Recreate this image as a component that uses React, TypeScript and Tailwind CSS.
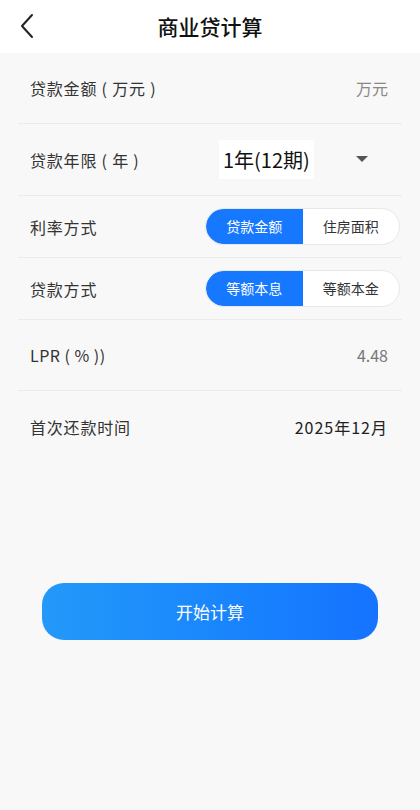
import {useState} from "react";

const font = {fontFamily: '"Noto Sans CJK SC", "Noto Sans", sans-serif'};

function Toggle({options, value, onChange}: {options: string[]; value: number; onChange: (i: number) => void}) {
  return (
    <div className="mr-[2px] flex h-[37px] w-[195px] rounded-full border border-[#e8e8e8] bg-white overflow-hidden">
      {options.map((opt, i) => (
        <button
          key={opt}
          onClick={() => onChange(i)}
          className={`flex-1 text-[14px] ${
            value === i ? "bg-[#1677ff] text-white rounded-l-full" : "text-[#333]"
          }`}
        >
          {opt}
        </button>
      ))}
    </div>
  );
}

export default function App() {
  const [rate, setRate] = useState(0);
  const [method, setMethod] = useState(0);

  return (
    <div style={font} className="min-h-[810px] w-[420px] bg-[#f8f8f8] text-[#333]">
      {/* Header */}
      <div className="relative flex h-[53px] items-center justify-center bg-white">
        <button className="absolute left-[18px] top-[13px]">
          <svg width="18" height="26" viewBox="0 0 18 26" fill="none">
            <path d="M14 2 L4 13 L14 24" stroke="#222" strokeWidth="2" strokeLinecap="round" strokeLinejoin="round"/>
          </svg>
        </button>
        <h1 className="text-[21px] font-medium text-[#111]">商业贷计算</h1>
      </div>

      {/* Form */}
      <div className="px-[18px]">
        <div className="flex h-[71px] items-center justify-between border-b border-[#ececec] pl-3 pr-[14px]">
          <span className="text-[16px] tracking-[0.8px]">贷款金额 ( 万元 )</span>
          <span className="text-[16px] text-[#888]">万元</span>
        </div>

        <div className="flex h-[72px] items-center border-b border-[#ececec] pl-3">
          <span className="w-[189px] shrink-0 text-[16px] tracking-[0.8px]">贷款年限 ( 年 )</span>
          <div className="flex h-[39px] items-center bg-white px-[4px] text-[20px] text-[#111]">
            1年(12期)
          </div>
          <svg className="ml-[42px]" width="12" height="7" viewBox="0 0 12 7">
            <path d="M0 0 L12 0 L6 6 Z" fill="#555"/>
          </svg>
        </div>

        <div className="flex h-[62px] items-center justify-between border-b border-[#ececec] pl-3">
          <span className="text-[16px] tracking-[0.8px]">利率方式</span>
          <Toggle options={["贷款金额", "住房面积"]} value={rate} onChange={setRate}/>
        </div>

        <div className="flex h-[62px] items-center justify-between border-b border-[#ececec] pl-3">
          <span className="text-[16px] tracking-[0.8px]">贷款方式</span>
          <Toggle options={["等额本息", "等额本金"]} value={method} onChange={setMethod}/>
        </div>

        <div className="flex h-[71px] items-center justify-between border-b border-[#ececec] pl-3 pr-[14px]">
          <span className="text-[16px] tracking-[0.5px]">LPR ( % ))</span>
          <span className="text-[16px] text-[#777]">4.48</span>
        </div>

        <div className="flex h-[72px] items-center justify-between pl-3 pr-[14px]">
          <span className="text-[16px] tracking-[0.8px]">首次还款时间</span>
          <span className="text-[16px] tracking-[1px] text-[#222]">2025年12月</span>
        </div>
      </div>

      {/* Submit */}
      <div className="mt-[120px] flex justify-center">
        <button className="h-[57px] w-[336px] rounded-[22px] bg-gradient-to-r from-[#2499f9] to-[#1673ff] text-[17px] text-white">
          开始计算
        </button>
      </div>
    </div>
  );
}
